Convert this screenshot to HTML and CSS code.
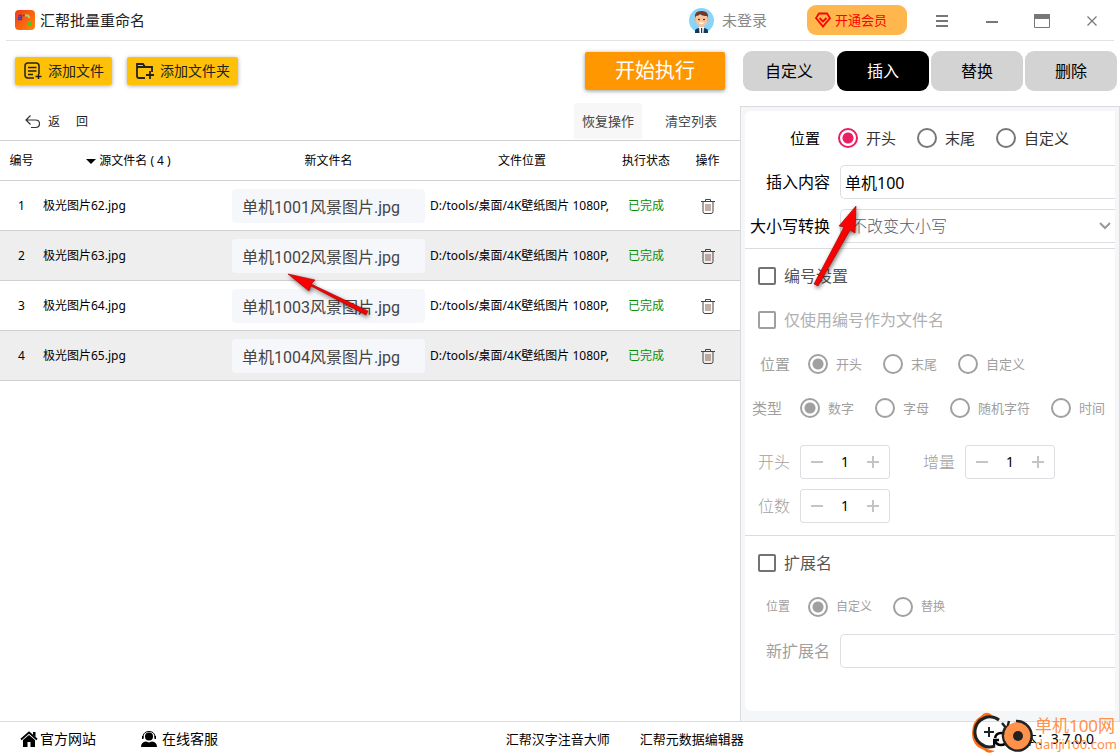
FILE: index.html
```html
<!DOCTYPE html>
<html lang="zh-CN">
<head>
<meta charset="utf-8">
<title>汇帮批量重命名</title>
<link rel="stylesheet" href="styles.css">
</head>
<body>
<svg class="sprite" aria-hidden="true">
  <symbol id="trash" viewBox="0 0 14 15"><path d="M0 2.500h14M4.500 2.500v-2h5v2M2 2.500v10q0 2 2 2h6q2 0 2-2v-10" fill="none" stroke="#444"/><path d="M5 5v7M7 5v7M9 5v7" stroke="#8a6050"/></symbol>
</svg>
<header class="titlebar">
  <svg class="logo" viewBox="0 0 20 20" aria-hidden="true">
    <defs><linearGradient id="lg" x1="0" y1="0" x2="1" y2="1"><stop offset="0" stop-color="#f33a12"/><stop offset="1" stop-color="#ff8a0a"/></linearGradient></defs>
    <rect width="20" height="20" rx="4" fill="url(#lg)"/>
    <path d="M3.500 5.500h3v4h-3v-2h3M8 5.500h1.500" fill="none" stroke="#2f3fe8" stroke-width="1.300"/>
    <path d="M10 5.500h2.500q1.500 0 1.500 2.500" fill="none" stroke="#8fe070" stroke-width="2"/>
    <path d="M12.500 16l2-5 2 5M13 14.500h3" fill="none" stroke="#35d32d" stroke-width="1.200"/>
  </svg>
  <h1 class="app-name">汇帮批量重命名</h1>
  <a class="account" href="#">
    <svg class="avatar" viewBox="0 0 25 25" aria-hidden="true">
      <circle cx="12.500" cy="12.500" r="12.500" fill="#87d5fb"/>
      <path d="M6 25v-2q0-2.500 4-3h5q4 .5 4 3v2z" fill="#17365c"/>
      <path d="M10 19h5l-.5 6h-4z" fill="#fff"/><path d="M12 20h1.200v5H12z" fill="#17365c"/>
      <circle cx="6.500" cy="11.500" r="1.500" fill="#eeb088"/><circle cx="18.500" cy="11.500" r="1.500" fill="#eeb088"/>
      <path d="M7 7h11v6q-1 6-5.500 6T7 13z" fill="#f9c39b"/>
      <path d="M6 10Q5 3 12 3q8-.5 7 7l-1-2q-5 0-7-2-1 2-4 2z" fill="#7b3524"/>
      <circle cx="10" cy="11.500" r=".8"/><circle cx="15" cy="11.500" r=".8"/>
      <path d="M9.500 14.500h6q-3 3.500-6 0" fill="#fff"/>
    </svg>
    <span>未登录</span>
  </a>
  <button class="vip" type="button">
    <svg width="16" height="16" viewBox="0 0 16 16" fill="none" stroke="#f00" stroke-width="1.800" aria-hidden="true"><path d="M4 1.500h8L15 6l-7 8.500L1 6zM4.500 6L8 9.500 11.500 6"/></svg>
    开通会员
  </button>
  <div class="window-controls">
    <button type="button" aria-label="菜单"><svg width="16" height="16" viewBox="0 0 16 16"><path d="M2 4h12M2 9h12M2 14h12" stroke="#777" stroke-width="2"/></svg></button>
    <button type="button" aria-label="最小化"><svg width="16" height="16" viewBox="0 0 16 16"><path d="M2 10h12" stroke="#777" stroke-width="2"/></svg></button>
    <button type="button" aria-label="最大化"><svg width="16" height="16" viewBox="0 0 16 16"><path d="M.5 2.500h15v13H.5z" fill="none" stroke="#777"/><path d="M0 2h16v5H0z" fill="#777"/></svg></button>
    <button type="button" aria-label="关闭"><svg width="16" height="16" viewBox="0 0 16 16"><path d="M3.500 4.500l9 9M12.500 4.500l-9 9" stroke="#777" stroke-width="1.200"/></svg></button>
  </div>
</header>

<main class="workspace">
  <section class="files">
    <div class="actions">
      <button class="add" type="button">
        <svg width="18" height="18" viewBox="0 0 18 18" fill="none" stroke="#222" stroke-width="1.500" aria-hidden="true"><path d="M10 16H4q-3 0-3-3V4q0-3 3-3h8q3 0 3 3v8M4 5.500h8.500M4 9h8.500M4 12.500h5M11.500 14.500h6M14.500 12v5"/></svg>
        添加文件
      </button>
      <button class="add" type="button">
        <svg width="18" height="18" viewBox="0 0 18 18" fill="none" stroke="#222" stroke-width="1.800" aria-hidden="true"><path d="M9 16H3q-2 0-2-2V2h6l2 3h7v5M1 5h8M10 13h8M14 9v8"/></svg>
        添加文件夹
      </button>
      <button class="run" type="button">开始执行</button>
    </div>
    <div class="list-tools">
      <button class="back" type="button">
        <svg width="16" height="14" viewBox="0 0 16 14" fill="none" stroke="#333" stroke-width="1.200" aria-hidden="true"><path d="M5.500 .5L1 5l4.500 4.500M1 5h9.500q4 0 4 3.700T10.500 12.500H6"/></svg>
        <span>返</span><span>回</span>
      </button>
      <button class="tool tool-filled" type="button">恢复操作</button>
      <button class="tool" type="button">清空列表</button>
    </div>
    <table class="file-table">
      <colgroup><col class="c-no"><col class="c-src"><col><col class="c-path"><col class="c-state"><col class="c-op"></colgroup>
      <thead><tr><th>编号</th><th class="src"><span class="sort"></span>源文件名 ( 4 )</th><th>新文件名</th><th>文件位置</th><th>执行状态</th><th>操作</th></tr></thead>
      <tbody>
        <tr><td class="no">1</td><td>极光图片62.jpg</td><td><input class="new-name" aria-label="新文件名 1" value="单机1001风景图片.jpg"></td><td class="path">D:/tools/桌面/4K壁纸图片 1080P,</td><td class="state">已完成</td><td class="op"><button type="button" aria-label="删除 1"><svg width="14" height="15"><use href="#trash"/></svg></button></td></tr>
        <tr><td class="no">2</td><td>极光图片63.jpg</td><td><input class="new-name" aria-label="新文件名 2" value="单机1002风景图片.jpg"></td><td class="path">D:/tools/桌面/4K壁纸图片 1080P,</td><td class="state">已完成</td><td class="op"><button type="button" aria-label="删除 2"><svg width="14" height="15"><use href="#trash"/></svg></button></td></tr>
        <tr><td class="no">3</td><td>极光图片64.jpg</td><td><input class="new-name" aria-label="新文件名 3" value="单机1003风景图片.jpg"></td><td class="path">D:/tools/桌面/4K壁纸图片 1080P,</td><td class="state">已完成</td><td class="op"><button type="button" aria-label="删除 3"><svg width="14" height="15"><use href="#trash"/></svg></button></td></tr>
        <tr><td class="no">4</td><td>极光图片65.jpg</td><td><input class="new-name" aria-label="新文件名 4" value="单机1004风景图片.jpg"></td><td class="path">D:/tools/桌面/4K壁纸图片 1080P,</td><td class="state">已完成</td><td class="op"><button type="button" aria-label="删除 4"><svg width="14" height="15"><use href="#trash"/></svg></button></td></tr>
      </tbody>
    </table>
    <svg class="arrow arrow-name" width="100" height="60" viewBox="0 0 100 60" aria-hidden="true"><path d="M8 8l27 6-4 4 57 27-2 4-55-29-2 5z" fill="#fb0000" stroke="#900" stroke-width=".6"/></svg>
  </section>

  <aside class="side">
    <nav class="tabs">
      <button type="button">自定义</button><button class="active" type="button">插入</button><button type="button">替换</button><button type="button">删除</button>
    </nav>
    <div class="panel">
      <form class="card">
        <div class="row radios big">
          <span class="label w75">位置</span>
          <label><input type="radio" name="pos" checked>开头</label>
          <label><input type="radio" name="pos">末尾</label>
          <label><input type="radio" name="pos">自定义</label>
        </div>
        <div class="row">
          <label class="label w85" for="content">插入内容</label>
          <input class="field" id="content" value="单机100">
        </div>
        <div class="row">
          <label class="label w85" for="case">大小写转换</label>
          <div class="select-box">
            <select class="field" id="case"><option>不改变大小写</option></select>
            <svg width="12" height="8" viewBox="0 0 12 8" fill="none" stroke="#999" stroke-width="2" aria-hidden="true"><path d="M1 1l5 5 5-5"/></svg>
          </div>
        </div>
        <section class="group">
          <label class="row check"><input type="checkbox">编号设置</label>
          <label class="row check muted"><input type="checkbox" disabled>仅使用编号作为文件名</label>
          <div class="row radios muted">
            <span class="label w45 mid">位置</span>
            <label><input type="radio" name="npos" checked disabled>开头</label>
            <label><input type="radio" name="npos" disabled>末尾</label>
            <label><input type="radio" name="npos" disabled>自定义</label>
          </div>
          <div class="row radios muted">
            <span class="label w37 mid">类型</span>
            <label><input type="radio" name="type" checked disabled>数字</label>
            <label><input type="radio" name="type" disabled>字母</label>
            <label><input type="radio" name="type" disabled>随机字符</label>
            <label><input type="radio" name="type" disabled>时间</label>
          </div>
          <div class="numbers">
            <div class="row muted">
              <label class="label w45" for="start">开头</label>
              <div class="stepper"><button type="button" aria-label="减少" disabled></button><input id="start" value="1"><button class="plus" type="button" aria-label="增加" disabled></button></div>
              <label class="label w65" for="step">增量</label>
              <div class="stepper"><button type="button" aria-label="减少" disabled></button><input id="step" value="1"><button class="plus" type="button" aria-label="增加" disabled></button></div>
            </div>
            <div class="row muted">
              <label class="label w45" for="digits">位数</label>
              <div class="stepper"><button type="button" aria-label="减少" disabled></button><input id="digits" value="1"><button class="plus" type="button" aria-label="增加" disabled></button></div>
            </div>
          </div>
        </section>
        <section class="group">
          <label class="row check"><input type="checkbox">扩展名</label>
          <div class="row radios muted small">
            <span class="label w45">位置</span>
            <label><input type="radio" name="ext" checked disabled>自定义</label>
            <label><input type="radio" name="ext" disabled>替换</label>
          </div>
          <div class="row muted">
            <label class="label w85" for="newext">新扩展名</label>
            <input class="field" id="newext">
          </div>
        </section>
      </form>
    </div>
    <svg class="arrow arrow-content" width="60" height="100" viewBox="0 0 60 100" aria-hidden="true"><path d="M48 8l-1 27-5-3-32 56-4-2 30-57-5-1z" fill="#fb0000" stroke="#900" stroke-width=".6"/></svg>
  </aside>
</main>

<footer class="statusbar">
  <a class="site" href="#">
    <svg width="18" height="16" viewBox="0 0 18 16" aria-hidden="true"><path d="M1 8.500L9 1.500l8 7" fill="none" stroke="#000" stroke-width="1.800"/><path d="M13 1h2.500v5L13 4zM3 9l6-5 6 5v7h-4.500v-5h-3v5H3z"/></svg>
    官方网站</a>
  <a class="service" href="#">
    <svg width="18" height="16" viewBox="0 0 18 16" aria-hidden="true"><circle cx="9" cy="5.500" r="4"/><path d="M3 7V5q1-4.500 6-4.500T15 5v2" fill="none" stroke="#000"/><path d="M2 5h1.500v3H2zM14.500 5H16v3h-1.500zM1 16q0-5 5-5.500l3 1 3-1q5 .5 5 5.500z"/></svg>
    在线客服</a>
  <a class="product" href="#">汇帮汉字注音大师</a>
  <a class="product" href="#">汇帮元数据编辑器</a>
  <span class="version"><svg width="16" height="16" viewBox="0 0 16 16" fill="none" stroke="#000" stroke-width="2.500" aria-hidden="true"><path d="M2 7q1-5 6-5t6 5M14 9q-1 5-6 5T2 9M1 15V9h5"/></svg>版本：<b>3.7.0.0</b></span>
</footer>
<div class="watermark">
  <svg width="64" height="44" viewBox="0 0 64 44" aria-hidden="true">
    <path d="M22 4Q16-1 11 5 2 10 2 22q0 13 12 17 4 5 11 1Q9 38 6 24 5 10 22 4z" fill="#ff6d12"/>
    <path d="M29 9A15 15 0 1 0 25 35" fill="none" stroke="#222" stroke-width="3"/>
    <path d="M14 21h10M19 16v10" stroke="#222" stroke-width="2"/>
    <path d="M32 12l5 6 2-8" fill="none" stroke="#222" stroke-width="2.500"/>
    <circle cx="48" cy="25" r="14" fill="#ff914b"/>
    <path d="M46 10a15 15 0 0 1 6 29A15 15 0 0 1 35 17" fill="none" stroke="#222" stroke-width="2.500"/>
    <circle cx="48" cy="25" r="5" fill="#222"/>
  </svg>
  <div class="mark-text"><span class="mark-name">单机100网</span><span class="mark-url">danji100.com</span></div>
</div>
</body>
</html>
```
FILE: styles.css
```css
* { box-sizing: border-box; }
html, body { margin: 0; height: 100%; }
body {
  display: flex; flex-direction: column; position: relative;
  min-height: 100%; overflow: hidden; background: #fff; color: #000;
  font: 12px/20px "Noto Sans", "Noto Sans CJK SC", sans-serif;
}
button, input, select { font: inherit; color: inherit; margin: 0; }
button { border: 0; padding: 0; background: none; }
a { color: inherit; text-decoration: none; }
.sprite { position: absolute; width: 0; height: 0; }

.titlebar { display: flex; align-items: center; height: 41px; margin: 0 6px; border-bottom: 1px solid #e2e2e2; padding-left: 9px; }
.logo { width: 20px; height: 20px; }
.app-name { margin: 0 auto 0 5px; font-size: 15px; font-weight: 400; color: #222; }
.account { display: flex; align-items: center; gap: 8px; margin-right: 40px; font-size: 15px; color: #888; }
.avatar { width: 25px; height: 25px; }
.vip { display: flex; align-items: center; gap: 4px; width: 100px; height: 30px; padding-left: 8px; border-radius: 9px; background: #ffb74d; color: #f00; font-size: 13px; }
.window-controls { display: flex; margin-left: 10px; margin-right: -3px; }
.window-controls button { display: grid; place-items: center; width: 50px; height: 40px; }

.workspace { flex: 1; display: grid; grid-template-columns: minmax(0, 1fr) 380px; min-height: 0; }
.files { position: relative; }
.actions { display: flex; align-items: center; gap: 15px; height: 60px; padding: 0 15px; }
.add { display: flex; align-items: center; gap: 6px; height: 28px; padding: 0 8px 0 9px; border-radius: 2px; background: #ffc107; font-size: 14px; color: #222; box-shadow: 0 1px 4px #0005; }
.run { margin-left: auto; width: 140px; height: 38px; border-radius: 2px; background: #ff9800; color: #fff; font-size: 20px; box-shadow: 0 1px 4px #0006; }
.list-tools { display: flex; gap: 15px; height: 39px; padding: 2px 15px 0 25px; }
.back { display: flex; align-items: center; gap: 7px; margin-right: auto; color: #222; }
.back span + span { margin-left: 9px; }
.tool { width: 68px; height: 36px; border-radius: 2px; font-size: 13px; color: #444; }
.tool-filled { background: #f7f7f7; }

.file-table { width: 100%; table-layout: fixed; border-collapse: separate; border-spacing: 0; border-top: 1px solid #d0d0d0; }
.c-no { width: 43px; } .c-src { width: 187px; } .c-path { width: 190px; } .c-state { width: 58px; } .c-op { width: 65px; }
th, td { padding: 0; border-bottom: 1px solid #d0d0d0; font-weight: 400; text-align: left; white-space: nowrap; }
th { height: 40px; text-align: center; }
th.src { padding-right: 16px; }
td { height: 50px; }
tbody tr:nth-child(even) { background: #eee; }
.no, .state, .op, th { text-align: center; }
.state { color: #0a8f0a; }
.sort { display: inline-block; margin-right: 3px; border: 5px solid transparent; border-top-color: #000; border-bottom: 0; vertical-align: middle; }
.new-name { display: block; width: calc(100% - 4px); height: 34px; margin-left: 2px; padding: 0 10px; border: 0; border-radius: 4px; background: #f6f7fb; color: #444; font: 16px/20px Roboto, "Noto Sans CJK SC", sans-serif; }
.path { padding-left: 3px; }
.op button { display: inline-grid; place-items: center; vertical-align: middle; }

.side { position: relative; display: flex; flex-direction: column; }
.tabs { display: flex; gap: 2px; padding: 10px 3px 15px; }
.tabs button { flex: 1; height: 40px; border-radius: 9px; background: #d3d3d3; font-size: 16px; }
.tabs .active { background: #000; color: #fff; }
.panel { flex: 1; display: flex; padding: 4px 4px 10px; border: 1px solid #d9dbde; border-bottom: 0; background: #f5f6f8; }
.card { flex: 1; padding-top: 5px; border-radius: 6px 0 0 6px; background: #fff; }
.row { display: flex; align-items: center; height: 44px; font-size: 16px; }
.label { text-align: right; white-space: nowrap; }
.w37 { width: 37px; } .w45 { width: 45px; } .w65 { width: 65px; } .w75 { width: 75px; } .w85 { width: 85px; }
.radios { font-size: 13px; }
.radios.big { font-size: 15px; }
.radios.small { font-size: 12px; }
.mid { font-size: 15px; }
.radios label { display: flex; align-items: center; gap: 8px; margin-left: 21px; }
.radios .label + label { margin-left: 18px; }
.big label { color: #333; }
.muted { color: #a0a0a0; }
input[type="radio"] { appearance: none; width: 20px; height: 20px; border: 2px solid #777; border-radius: 50%; background: #fff; }
input[type="radio"]:checked { border-color: #e91e63; background: radial-gradient(circle, #e91e63 0 5px, #fff 6px); }
input[type="radio"]:disabled { border-color: #a0a0a0; }
input[type="radio"]:disabled:checked { background: radial-gradient(circle, #a0a0a0 0 5px, #fff 6px); }
input[type="checkbox"] { appearance: none; width: 18px; height: 18px; border: 2px solid #737373; border-radius: 2px; }
input[type="checkbox"]:disabled { border-color: #a0a0a0; }
.check { gap: 8px; padding-left: 13px; color: #555; }
.check.muted { color: #b0b0b0; }
.field { flex: 1; min-width: 0; width: 100%; height: 34px; margin-left: 10px; padding: 0 4px; border: 1px solid #dcdee2; border-right: 0; border-radius: 5px 0 0 5px; background: #fff; color: #000; }
.select-box { position: relative; flex: 1; display: flex; margin-left: 10px; }
.select-box .field { appearance: none; margin: 0; padding-left: 10px; color: #515a6e; font-weight: 300; }
.select-box svg { position: absolute; right: 4px; top: 13px; }
.group { border-top: 1px solid #dcdcdc; padding: 5px 0 7px; }
.numbers { padding-top: 10px; font-weight: 300; }
.stepper { display: flex; width: 90px; height: 34px; margin-left: 10px; border: 1px solid #dcdee2; border-radius: 3px; color: #000; font-size: 14px; }
.stepper input { width: 24px; border: 0; padding: 0; text-align: center; background: none; font-weight: 400; }
.stepper button { flex: 1; background: linear-gradient(#c4c4c4, #c4c4c4) center / 12px 2px no-repeat; }
.stepper .plus { background: linear-gradient(#c4c4c4, #c4c4c4) center / 12px 2px no-repeat, linear-gradient(#c4c4c4, #c4c4c4) center / 2px 12px no-repeat; }

.statusbar { display: flex; align-items: center; height: 34px; padding: 0 26px 0 20px; border-top: 1px solid #dcdcdc; font-size: 14px; }
.statusbar a { display: flex; align-items: center; gap: 2px; }
.statusbar .service { gap: 4px; margin-left: 44px; margin-right: auto; }
.statusbar .product { margin-right: 30px; font-size: 13px; }
.version { display: flex; align-items: center; margin-left: 219px; }
.version b { font-weight: 400; }

.arrow { position: absolute; filter: drop-shadow(1px 2px 2px #0008); pointer-events: none; }
.arrow-name { left: 280px; top: 225px; }
.arrow-content { left: 68px; top: 157px; }
.watermark { position: absolute; right: 3px; bottom: 0; display: flex; align-items: center; gap: 1px; pointer-events: none; }
.mark-text { display: flex; flex-direction: column; color: #ff914b; }
.mark-name { font-size: 17px; line-height: 21px; }
.mark-url { font-size: 13px; line-height: 16px; }
```
